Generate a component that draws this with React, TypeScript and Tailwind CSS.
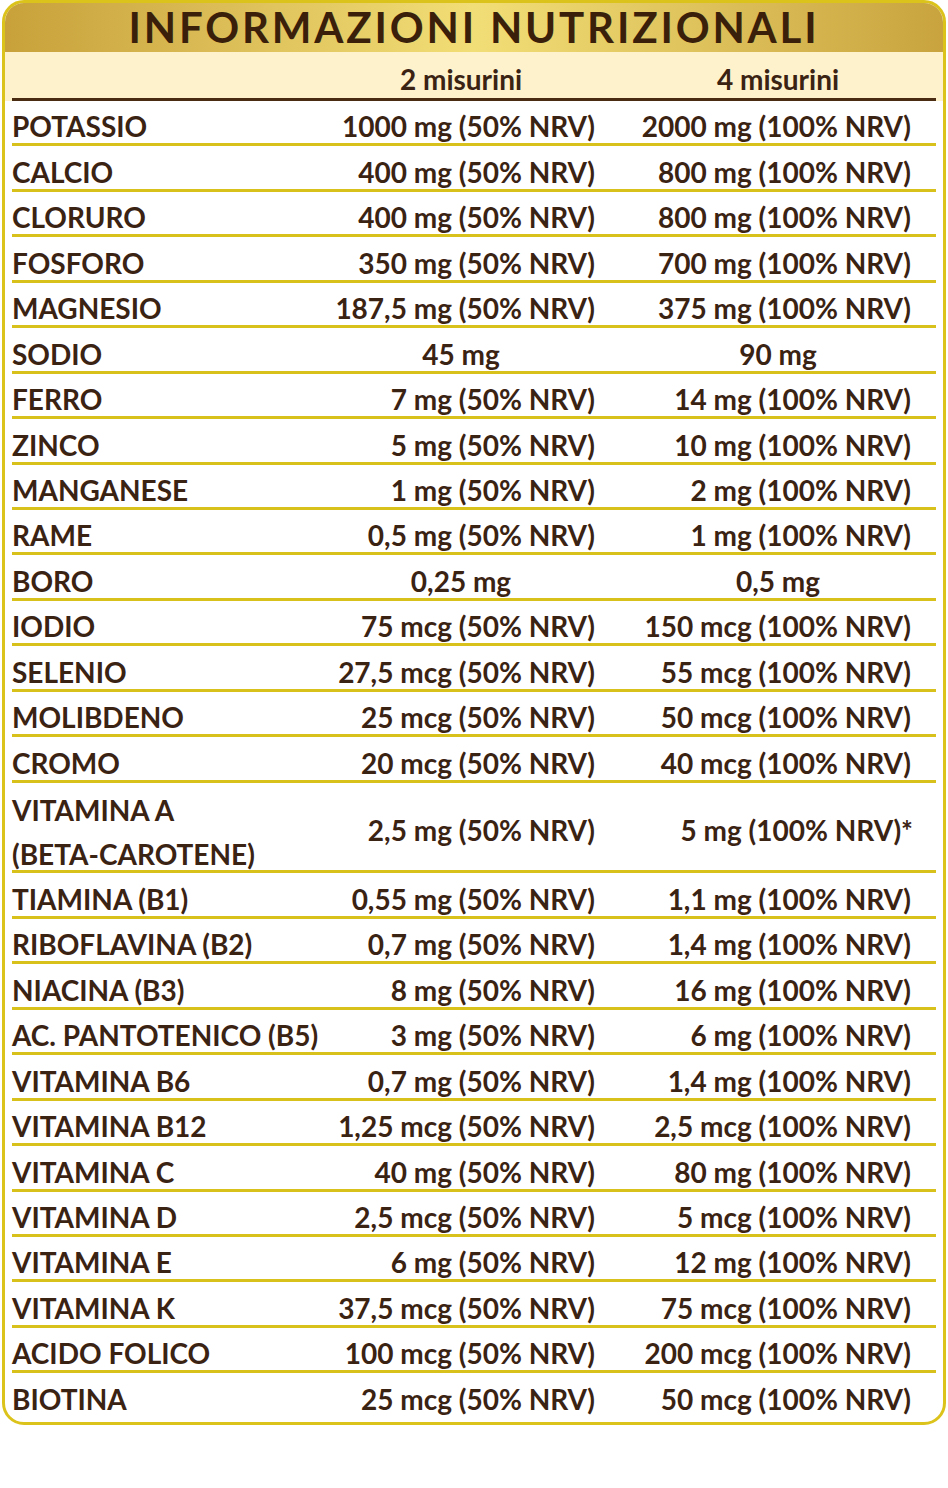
import React from "react";

type Row = { name: string[]; a: string; b: string; center?: boolean };

const rows: Row[] = [
  { name: ["POTASSIO"], a: "1000 mg (50% NRV)", b: "2000 mg (100% NRV)" },
  { name: ["CALCIO"], a: "400 mg (50% NRV)", b: "800 mg (100% NRV)" },
  { name: ["CLORURO"], a: "400 mg (50% NRV)", b: "800 mg (100% NRV)" },
  { name: ["FOSFORO"], a: "350 mg (50% NRV)", b: "700 mg (100% NRV)" },
  { name: ["MAGNESIO"], a: "187,5 mg (50% NRV)", b: "375 mg (100% NRV)" },
  { name: ["SODIO"], a: "45 mg", b: "90 mg", center: true },
  { name: ["FERRO"], a: "7 mg (50% NRV)", b: "14 mg (100% NRV)" },
  { name: ["ZINCO"], a: "5 mg (50% NRV)", b: "10 mg (100% NRV)" },
  { name: ["MANGANESE"], a: "1 mg (50% NRV)", b: "2 mg (100% NRV)" },
  { name: ["RAME"], a: "0,5 mg (50% NRV)", b: "1 mg (100% NRV)" },
  { name: ["BORO"], a: "0,25 mg", b: "0,5 mg", center: true },
  { name: ["IODIO"], a: "75 mcg (50% NRV)", b: "150 mcg (100% NRV)" },
  { name: ["SELENIO"], a: "27,5 mcg (50% NRV)", b: "55 mcg (100% NRV)" },
  { name: ["MOLIBDENO"], a: "25 mcg (50% NRV)", b: "50 mcg (100% NRV)" },
  { name: ["CROMO"], a: "20 mcg (50% NRV)", b: "40 mcg (100% NRV)" },
  { name: ["VITAMINA A", "(BETA-CAROTENE)"], a: "2,5 mg (50% NRV)", b: "5 mg (100% NRV)*" },
  { name: ["TIAMINA (B1)"], a: "0,55 mg (50% NRV)", b: "1,1 mg (100% NRV)" },
  { name: ["RIBOFLAVINA (B2)"], a: "0,7 mg (50% NRV)", b: "1,4 mg (100% NRV)" },
  { name: ["NIACINA (B3)"], a: "8 mg (50% NRV)", b: "16 mg (100% NRV)" },
  { name: ["AC. PANTOTENICO (B5)"], a: "3 mg (50% NRV)", b: "6 mg (100% NRV)" },
  { name: ["VITAMINA B6"], a: "0,7 mg (50% NRV)", b: "1,4 mg (100% NRV)" },
  { name: ["VITAMINA B12"], a: "1,25 mcg (50% NRV)", b: "2,5 mcg (100% NRV)" },
  { name: ["VITAMINA C"], a: "40 mg (50% NRV)", b: "80 mg (100% NRV)" },
  { name: ["VITAMINA D"], a: "2,5 mcg (50% NRV)", b: "5 mcg (100% NRV)" },
  { name: ["VITAMINA E"], a: "6 mg (50% NRV)", b: "12 mg (100% NRV)" },
  { name: ["VITAMINA K"], a: "37,5 mcg (50% NRV)", b: "75 mcg (100% NRV)" },
  { name: ["ACIDO FOLICO"], a: "100 mcg (50% NRV)", b: "200 mcg (100% NRV)" },
  { name: ["BIOTINA"], a: "25 mcg (50% NRV)", b: "50 mcg (100% NRV)" },
];

const font = { fontFamily: "Lato, 'Noto Sans', sans-serif" };

function TableRow({ row, last }: { row: Row; last: boolean }) {
  const double = row.name.length > 1;
  const align = row.center ? "justify-center" : "justify-end";
  if (double) {
    return (
      <div className="mx-[7px] h-[90.9px] border-b-[3px] border-[#d9c11b] grid grid-cols-[315px_268px_50px_266px]">
        <div className="flex flex-col">
          {row.name.map((n) => (
            <div key={n} className="h-[44px] flex items-end pb-[3px] leading-none whitespace-nowrap">
              {n}
            </div>
          ))}
        </div>
        <div className={`flex items-center ${align} leading-none whitespace-nowrap pt-[6px]`}>{row.a}</div>
        <div />
        <div className="flex items-center justify-end leading-none whitespace-nowrap pt-[6px] -mr-[2px]">{row.b}</div>
      </div>
    );
  }
  return (
    <div
      className={`mx-[7px] grid grid-cols-[315px_268px_50px_266px] ${
        last ? "h-[42.45px]" : "h-[45.45px] border-b-[3px] border-[#d9c11b]"
      }`}
    >
      <div className="flex items-end pb-[3px] leading-none whitespace-nowrap">{row.name[0]}</div>
      <div className={`flex items-end ${align} pb-[3px] leading-none whitespace-nowrap`}>{row.a}</div>
      <div />
      <div className={`flex items-end ${align} pb-[3px] leading-none whitespace-nowrap`}>{row.b}</div>
    </div>
  );
}

export default function App() {
  return (
    <div className="w-[948px] h-[1488px] bg-white" style={font}>
      <div className="ml-[2px] w-[944px] border-[3px] border-[#dcc31c] rounded-[22px] overflow-hidden bg-white text-[#3b2313] text-[28px] font-bold">
        <div className="h-[49px] flex items-end justify-center pb-[4px] bg-linear-to-r from-[#c8a13a] via-[#f2de76] to-[#c9a43e]">
          <div className="text-[42px] leading-none font-bold text-[#3a1f0b] tracking-[2.8px]">
            INFORMAZIONI NUTRIZIONALI
          </div>
        </div>
        <div className="bg-[#fdf2cc]">
          <div className="mx-[7px] h-[49px] border-b-[3px] border-[#4a2c12] grid grid-cols-[315px_268px_50px_266px]">
            <div />
            <div className="flex items-end justify-center pb-[5px] leading-none">2 misurini</div>
            <div />
            <div className="flex items-end justify-center pb-[5px] leading-none">4 misurini</div>
          </div>
        </div>
        {rows.map((r, i) => (
          <TableRow key={r.name[0]} row={r} last={i === rows.length - 1} />
        ))}
        <div className="h-[6px]" />
      </div>
    </div>
  );
}
